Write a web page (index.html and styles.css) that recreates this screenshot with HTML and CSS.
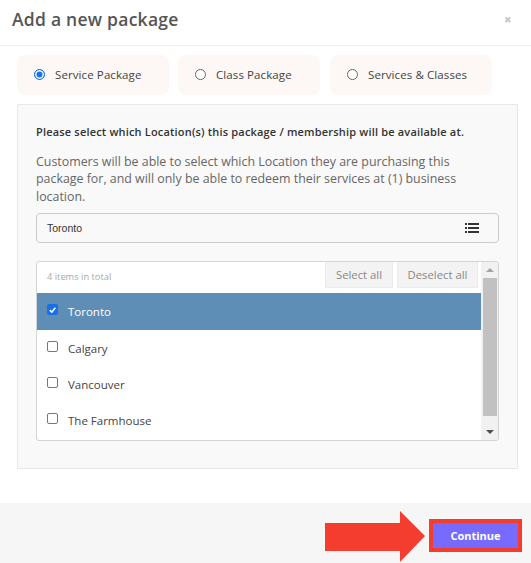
FILE: index.html
```html
<!DOCTYPE html>
<html>
<head>
<meta charset="utf-8">
<link rel="stylesheet" href="styles.css">
</head>
<body>
<div class="modal">
  <div class="modal-header">
    <h1 class="title">Add a new package</h1>
    <span class="close">&#x2716;</span>
  </div>
  <div class="modal-body">
    <div class="types">
      <label class="type type-1"><span class="radio checked"></span>Service Package</label>
      <label class="type type-2"><span class="radio"></span>Class Package</label>
      <label class="type type-3"><span class="radio"></span>Services &amp; Classes</label>
    </div>
    <div class="panel">
      <p class="lead">Please select which Location(s) this package / membership will be available at.</p>
      <p class="desc">Customers will be able to select which Location they are purchasing this package for, and will only be able to redeem their services at (1) business location.</p>
      <div class="select">
        <span class="select-value">Toronto</span>
        <svg class="list-icon" width="14" height="10" viewBox="0 0 14 10"><rect x="0" y="0" width="2" height="2" fill="#333"/><rect x="3" y="0" width="11" height="2" fill="#333"/><rect x="0" y="4" width="2" height="2" fill="#333"/><rect x="3" y="4" width="11" height="2" fill="#333"/><rect x="0" y="8" width="2" height="2" fill="#333"/><rect x="3" y="8" width="11" height="2" fill="#333"/></svg>
      </div>
      <div class="listbox">
        <div class="list-main">
          <div class="list-head">
            <span class="count">4 items in total</span>
            <div class="actions">
              <span class="btn">Select all</span>
              <span class="btn">Deselect all</span>
            </div>
          </div>
          <div class="item selected"><span class="check checked"><svg width="10" height="10" viewBox="0 0 10 10"><path d="M2 5.2 L4.2 7.4 L8.2 2.6" stroke="#fff" stroke-width="1.8" fill="none"/></svg></span>Toronto</div>
          <div class="item"><span class="check"></span>Calgary</div>
          <div class="item"><span class="check"></span>Vancouver</div>
          <div class="item"><span class="check"></span>The Farmhouse</div>
        </div>
        <div class="scrollbar">
          <span class="arrow up"></span>
          <span class="thumb"></span>
          <span class="arrow down"></span>
        </div>
      </div>
    </div>
  </div>
  <div class="modal-footer">
    <svg class="pointer" width="101" height="52" viewBox="0 0 101 52"><polygon points="0,12 75,12 75,0 100,25 75,51 75,40 0,40" fill="#f53d2f"/></svg>
    <div class="highlight"><span class="continue">Continue</span></div>
  </div>
</div>
</body>
</html>
```

FILE: styles.css
```css
* { box-sizing: border-box; }
html, body { margin: 0; padding: 0; background: #fff; }
body { font-family: "Open Sans", "Liberation Sans", sans-serif; color: #555; }

.modal { width: 531px; height: 563px; display: flex; flex-direction: column; overflow: hidden; }

.modal-header { height: 47px; border-bottom: 1px solid #eee; display: flex; align-items: center; justify-content: space-between; padding: 0 19px 0 12px; }
.title { margin: 0; font-size: 17.5px; font-weight: 600; color: #555; letter-spacing: 0.25px; position: relative; top: -3px; }
.close { font-size: 9px; color: #c8c8c8; position: relative; top: -3px; }

.modal-body { padding: 9px 13px 0 17px; }

.types { display: flex; height: 40px; }
.type { background: #fdf7f5; border-radius: 8px; display: flex; align-items: center; font-size: 11.5px; letter-spacing: 0.1px; color: #444; }
.type-1 { width: 152px; padding-left: 17px; margin-right: 9px; }
.type-2 { width: 142px; padding-left: 17px; margin-right: 10px; }
.type-3 { width: 162px; padding-left: 17px; }
.radio { width: 11px; height: 11px; border-radius: 50%; border: 1px solid #666; background: #fff; margin-right: 10px; flex: none; }
.radio.checked { border-color: #1a73e8; background: #1a73e8; box-shadow: inset 0 0 0 1.5px #fff; }

.panel { margin-top: 9px; background: #f9f9f9; border: 1px solid #e8e8e8; padding: 19px 18px 27px 18px; }
.lead { margin: 0; font-size: 11px; letter-spacing: 0.18px; font-weight: 600; color: #333; }
.desc { margin: 14px 0 0; font-size: 12.4px; line-height: 17.5px; color: #666; }
.select { margin-top: 8px; height: 30px; border: 1px solid #ccc; border-radius: 4px; background: #f9f9f9; display: flex; align-items: center; justify-content: space-between; padding: 0 19px 0 10px; }
.select-value { font-family: "Liberation Sans", Arial, sans-serif; font-size: 10.5px; color: #333; }

.listbox { margin-top: 18px; height: 180px; border: 1px solid #d4d4d4; border-radius: 3px; background: #fff; display: flex; overflow: hidden; }
.list-main { flex: 1; display: flex; flex-direction: column; }
.list-head { height: 31px; display: flex; justify-content: space-between; align-items: flex-start; }
.count { font-size: 9.3px; color: #aaa; padding: 8px 0 0 10px; }
.actions { display: flex; gap: 4px; padding-right: 3px; }
.btn { background: #f3f3f3; height: 26px; display: flex; align-items: center; justify-content: center; font-size: 11.3px; color: #888; border: 1px solid #ececec; border-top: 0; }
.actions .btn:first-child { width: 68px; }
.actions .btn:last-child { width: 81px; }

.item { height: 36px; display: flex; align-items: center; padding-left: 10px; font-size: 11.5px; color: #444; }
.item.selected { background: #5e8db6; color: #fff; height: 37px; }
.check { width: 11px; height: 11px; border: 1px solid #777; border-radius: 2px; background: #fff; margin-right: 10px; display: flex; align-items: center; justify-content: center; position: relative; top: -2px; }
.check.checked { background: #1a6fe6; border-color: #1a6fe6; }

.scrollbar { width: 17px; background: #f1f1f1; display: flex; flex-direction: column; align-items: center; }
.arrow { width: 0; height: 0; border-left: 4px solid transparent; border-right: 4px solid transparent; }
.arrow.up { border-bottom: 4px solid #a3a3a3; margin-top: 6px; }
.arrow.down { border-top: 4px solid #505050; margin-bottom: 6px; }
.thumb { width: 14px; flex: 1; background: #c1c1c1; margin: 6px 0 14px; }

.modal-footer { margin-top: 34px; flex: 1; background: #f6f6f6; display: flex; align-items: flex-start; justify-content: flex-end; padding: 8px 9px 0 0; }
.pointer { margin-top: 0; margin-right: 3px; }
.highlight { margin-top: 8px; background: #f53d2f; padding: 4px; }
.continue { display: flex; align-items: center; justify-content: center; width: 85px; height: 25px; background: #776bff; color: #fff; font-size: 11px; font-weight: 700; }
```
